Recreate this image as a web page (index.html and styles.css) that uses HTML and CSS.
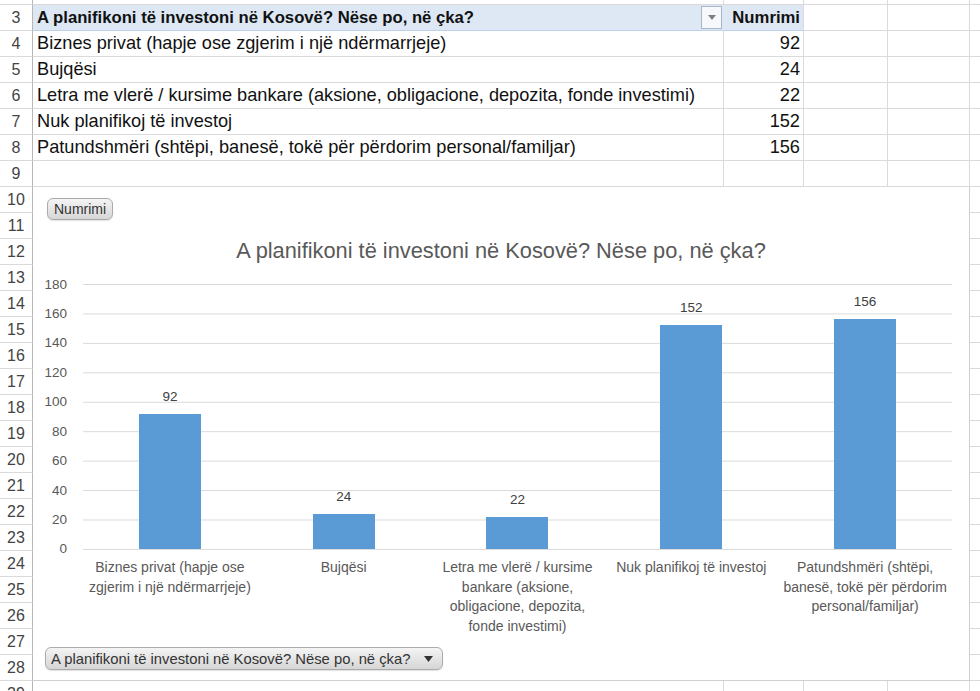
FILE: index.html
```html
<!DOCTYPE html>
<html lang="sq">
<head>
<meta charset="utf-8">
<title>Numrimi</title>
<link rel="stylesheet" href="styles.css">
</head>
<body>
<div class="sheet">
  <div class="grid">
    <div class="rh r2"></div><div class="c r2"></div><div class="c r2"></div><div class="c r2"></div><div class="c r2"></div><div class="c r2 last"></div>

    <div class="rh">3</div>
    <div class="c hdr hdr-a"><b>A planifikoni të investoni në Kosovë? Nëse po, në çka?</b><span class="filter"><svg width="8" height="5" viewBox="0 0 8 5"><path d="M0 0h8L4 5z" fill="#7f7f7f"/></svg></span></div>
    <div class="c hdr num"><b>Numrimi</b></div>
    <div class="c"></div><div class="c"></div><div class="c last"></div>

    <div class="rh">4</div><div class="c txt">Biznes privat (hapje ose zgjerim i një ndërmarrjeje)</div><div class="c num">92</div><div class="c"></div><div class="c"></div><div class="c last"></div>
    <div class="rh">5</div><div class="c txt">Bujqësi</div><div class="c num">24</div><div class="c"></div><div class="c"></div><div class="c last"></div>
    <div class="rh">6</div><div class="c txt">Letra me vlerë / kursime bankare (aksione, obligacione, depozita, fonde investimi)</div><div class="c num">22</div><div class="c"></div><div class="c"></div><div class="c last"></div>
    <div class="rh">7</div><div class="c txt">Nuk planifikoj të investoj</div><div class="c num">152</div><div class="c"></div><div class="c"></div><div class="c last"></div>
    <div class="rh">8</div><div class="c txt">Patundshmëri (shtëpi, banesë, tokë për përdorim personal/familjar)</div><div class="c num">156</div><div class="c"></div><div class="c"></div><div class="c last"></div>
    <div class="rh">9</div><div class="c"></div><div class="c"></div><div class="c"></div><div class="c"></div><div class="c last"></div>
  </div>

  <div class="band">
    <div class="rh-col">
      <div class="rh">10</div><div class="rh">11</div><div class="rh">12</div><div class="rh">13</div><div class="rh">14</div>
      <div class="rh">15</div><div class="rh">16</div><div class="rh">17</div><div class="rh">18</div><div class="rh">19</div>
      <div class="rh">20</div><div class="rh">21</div><div class="rh">22</div><div class="rh">23</div><div class="rh">24</div>
      <div class="rh">25</div><div class="rh">26</div><div class="rh">27</div><div class="rh">28</div>
    </div>

    <div class="chart">
      <div class="chip chip-field">Numrimi</div>
      <div class="chart-title">A planifikoni të investoni në Kosovë? Nëse po, në çka?</div>

      <div class="plot-row">
        <div class="yaxis">
          <span>180</span><span>160</span><span>140</span><span>120</span><span>100</span>
          <span>80</span><span>60</span><span>40</span><span>20</span><span>0</span>
        </div>
        <div class="plot">
          <div class="cat"><span class="dl">92</span><div class="bar" style="height:135.4px"></div></div>
          <div class="cat"><span class="dl">24</span><div class="bar" style="height:35.3px"></div></div>
          <div class="cat"><span class="dl">22</span><div class="bar" style="height:32.4px"></div></div>
          <div class="cat"><span class="dl">152</span><div class="bar" style="height:223.7px"></div></div>
          <div class="cat"><span class="dl">156</span><div class="bar" style="height:229.6px"></div></div>
        </div>
      </div>

      <div class="xaxis">
        <div>Biznes privat (hapje ose<br>zgjerim i një ndërmarrjeje)</div>
        <div>Bujqësi</div>
        <div>Letra me vlerë / kursime<br>bankare (aksione,<br>obligacione, depozita,<br>fonde investimi)</div>
        <div>Nuk planifikoj të investoj</div>
        <div>Patundshmëri (shtëpi,<br>banesë, tokë për përdorim<br>personal/familjar)</div>
      </div>

      <div class="chip chip-axis">A planifikoni të investoni në Kosovë? Nëse po, në çka?<svg width="9" height="6" viewBox="0 0 9 6"><path d="M0 0h9L4.5 6z" fill="#333"/></svg></div>
    </div>

    <div class="edge"></div>
  </div>

  <div class="grid bottom">
    <div class="rh">29</div><div class="c"></div><div class="c"></div><div class="c"></div><div class="c"></div><div class="c last"></div>
  </div>
</div>
</body>
</html>
```

FILE: styles.css
```css
* { box-sizing: border-box; }

html, body {
  margin: 0;
  padding: 0;
  background: #fff;
  overflow: hidden;
}

body {
  width: 980px;
  height: 691px;
  font-family: "Liberation Sans", Arial, sans-serif;
  color: #111;
}

.sheet {
  width: 980px;
  height: 691px;
  overflow: hidden;
}

.grid {
  display: grid;
  grid-template-columns: 33px 691px 80px 84px 82px 10px;
  grid-auto-rows: 26px;
}

.grid:first-child { grid-template-rows: 5px; }

.rh {
  height: 26px;
  border-right: 1px solid #b7b7b7;
  border-bottom: 1px solid #dadada;
  color: #444;
  font-size: 16px;
  display: flex;
  align-items: center;
  justify-content: center;
}

.c {
  border-right: 1px solid #dadada;
  border-bottom: 1px solid #dadada;
  font-size: 18.2px;
  display: flex;
  align-items: center;
  padding: 0 4px;
  white-space: nowrap;
  overflow: hidden;
}

.c.last { border-right: none; }

.r2 { height: 5px; }

.hdr {
  background: #dde8f4;
  border-bottom-color: #bcd0e8;
}

.hdr b {
  font-weight: bold;
  font-size: 16.7px;
}

.hdr-a {
  justify-content: space-between;
  padding-right: 0;
  border-right-color: #dde8f4;
}

.filter {
  width: 21px;
  height: 23px;
  border: 1px solid #a9b6c6;
  background: #f6f8fb;
  display: flex;
  align-items: center;
  justify-content: center;
  margin-right: 1px;
}

.txt { padding-left: 4px; }

.num {
  justify-content: flex-end;
  padding-right: 3px;
}

/* Chart band */
.band {
  display: flex;
  height: 494px;
}

.rh-col {
  width: 33px;
  flex: none;
}

.chart {
  width: 937px;
  flex: none;
  height: 494px;
  border-right: 1px solid #cfcfcf;
  border-bottom: 1px solid #cfcfcf;
  display: flex;
  flex-direction: column;
  align-items: flex-start;
}

.edge {
  flex: 1;
  background-image: linear-gradient(to top, #dadada 1px, transparent 1px);
  background-size: 100% 26px;
}

.chip {
  display: inline-flex;
  align-items: center;
  border: 1px solid #ababab;
  border-radius: 6px;
  background: linear-gradient(#f4f4f4, #d6d6d6);
  color: #333;
  box-shadow: 0 1px 1px rgba(0,0,0,0.12);
  white-space: nowrap;
}

.chip-field {
  margin: 11px 0 0 14px;
  height: 22px;
  padding: 0 6px;
  font-size: 14px;
}

.chart-title {
  align-self: stretch;
  text-align: center;
  margin-top: 17px;
  line-height: 28px;
  font-size: 21.8px;
  color: #595959;
}

.plot-row {
  display: flex;
  margin-top: 19px;
}

.yaxis {
  width: 34px;
  height: 266px;
  display: flex;
  flex-direction: column;
  justify-content: space-between;
  margin-right: 16px;
}

.yaxis span {
  height: 1px;
  display: flex;
  align-items: center;
  justify-content: flex-end;
  line-height: 16px;
  font-size: 13.5px;
  color: #595959;
}

.plot {
  width: 869px;
  height: 266px;
  display: flex;
  background-image: linear-gradient(#d9d9d9 1px, transparent 1px);
  background-size: 100% 29.44px;
}

.cat {
  flex: 1;
  display: flex;
  flex-direction: column;
  justify-content: flex-end;
  align-items: center;
  padding-bottom: 1px;
}

.dl {
  font-size: 13.5px;
  line-height: 16px;
  color: #404040;
  margin-bottom: 9px;
}

.bar {
  width: 62px;
  background: #5b9bd5;
}

.xaxis {
  margin-left: 50px;
  width: 869px;
  display: grid;
  grid-template-columns: repeat(5, 1fr);
  padding-top: 8px;
  font-size: 14px;
  line-height: 19.5px;
  color: #595959;
  text-align: center;
}

.chip-axis {
  margin: auto 0 10px 12px;
  height: 23px;
  padding: 0 9px 0 5px;
  font-size: 14.8px;
  gap: 14px;
}
```
